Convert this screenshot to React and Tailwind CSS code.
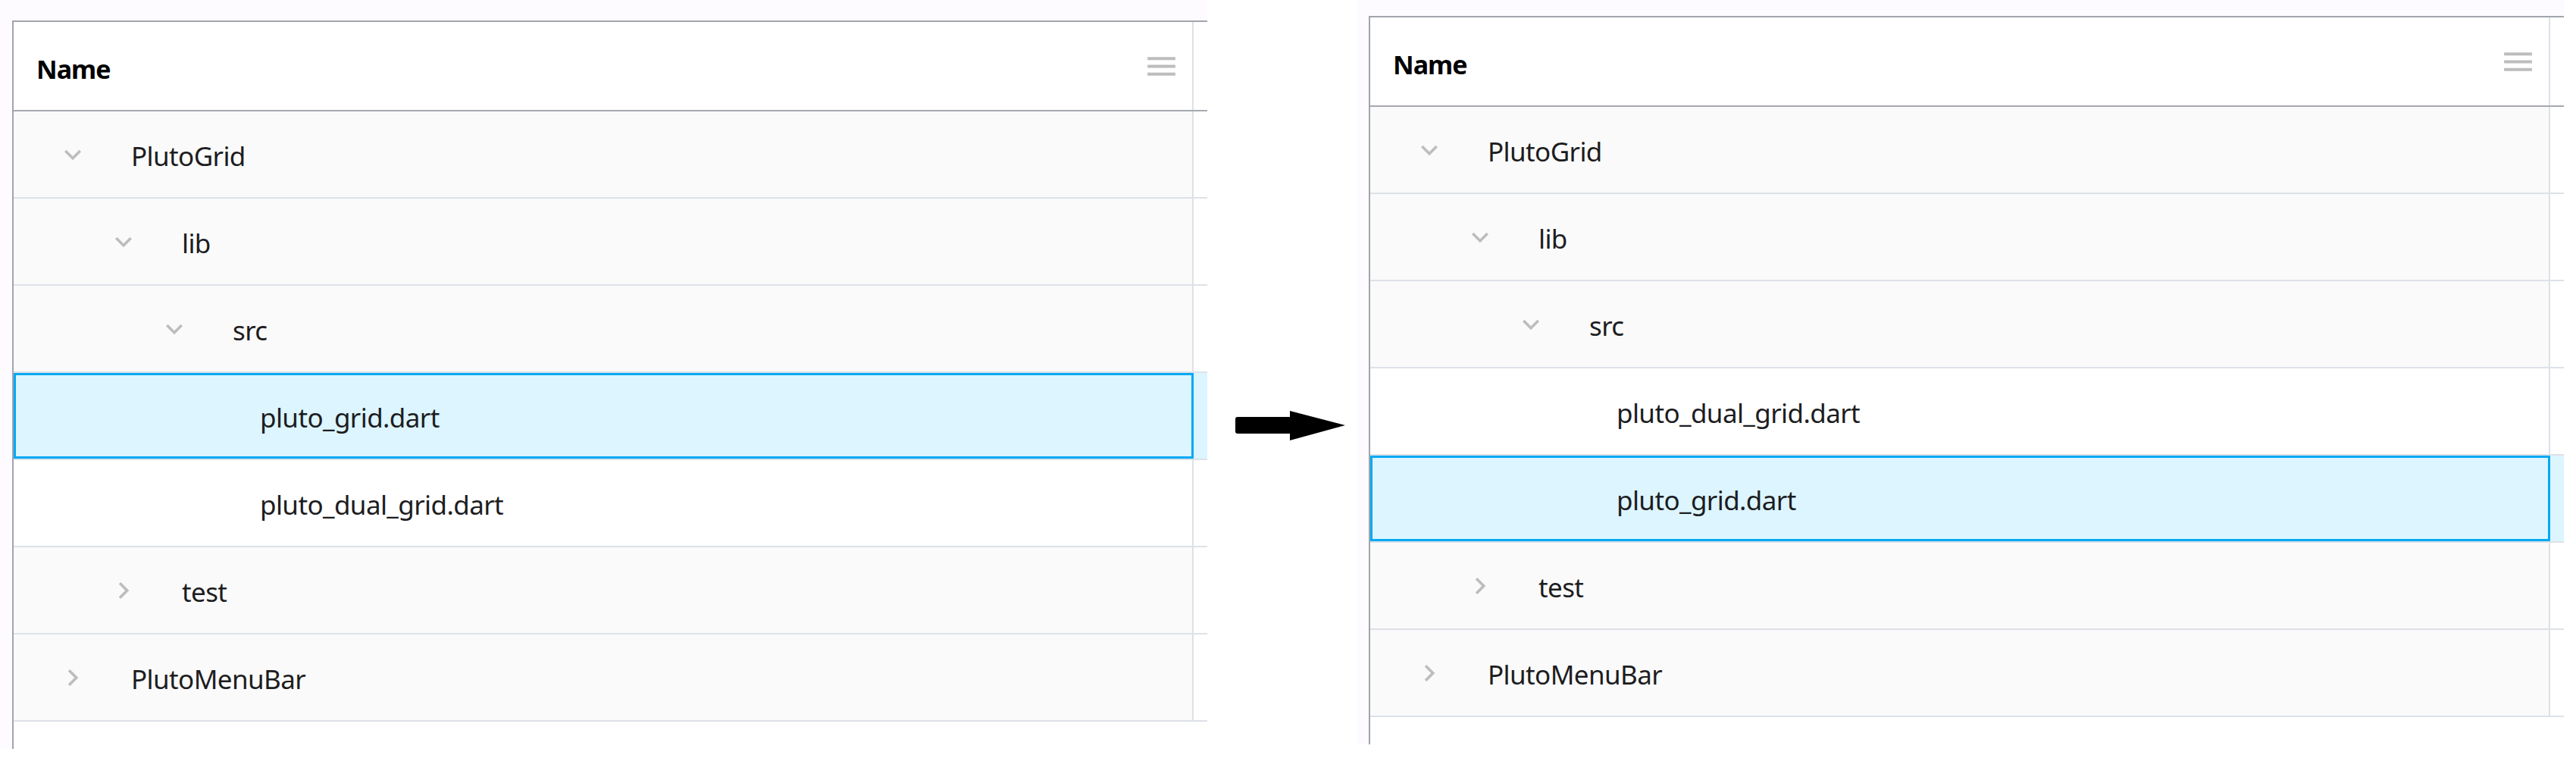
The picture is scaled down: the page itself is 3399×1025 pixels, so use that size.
const ChevronDown = () => (
  <svg viewBox="0 0 24 24" className="w-[44px] h-[44px]" fill="#bdbdbd">
    <path d="M7.41 8.59L12 13.17l4.59-4.58L18 10l-6 6-6-6 1.41-1.41z" />
  </svg>
);

const ChevronRight = () => (
  <svg viewBox="0 0 24 24" className="w-[44px] h-[44px]" fill="#bdbdbd">
    <path d="M8.59 16.59L13.17 12 8.59 7.41 10 6l6 6-6 6-1.41-1.41z" />
  </svg>
);

const MenuIcon = () => (
  <svg viewBox="0 0 24 24" className="w-[49px] h-[49px]" fill="#bdbdbd">
    <path d="M3 18h18v-2H3v2zm0-5h18v-2H3v2zm0-5h18V6H3v2z" />
  </svg>
);

const indent = ["pl-[56px]", "pl-[123px]", "pl-[190px]"];

const beforeRows = [
  { name: "PlutoGrid", depth: 0, folder: true, open: true },
  { name: "lib", depth: 1, folder: true, open: true },
  { name: "src", depth: 2, folder: true, open: true },
  { name: "pluto_grid.dart", selected: true },
  { name: "pluto_dual_grid.dart" },
  { name: "test", depth: 1, folder: true },
  { name: "PlutoMenuBar", depth: 0, folder: true },
];

const afterRows = [
  { name: "PlutoGrid", depth: 0, folder: true, open: true },
  { name: "lib", depth: 1, folder: true, open: true },
  { name: "src", depth: 2, folder: true, open: true },
  { name: "pluto_dual_grid.dart" },
  { name: "pluto_grid.dart", selected: true },
  { name: "test", depth: 1, folder: true },
  { name: "PlutoMenuBar", depth: 0, folder: true },
];

function Row({ row }) {
  if (row.selected) {
    return (
      <div className="flex h-[115px] border-b-2 border-[#dde1e8] bg-[#dcf5ff]">
        <div className="w-[1557px] h-full border-[3px] border-[#03a9f4] flex items-center pl-[322px]">
          <span className="text-[35px] tracking-[-0.6px] text-[#1d1d1f] pt-[6px]">{row.name}</span>
        </div>
        <div className="flex-1" />
      </div>
    );
  }
  return (
    <div className="flex h-[115px] border-b-2 border-[#dde1e8] bg-white">
      <div
        className={`w-[1557px] h-full border-r-2 border-[#dde1e8] flex items-center ${
          row.folder ? "bg-[#fafafa] " + indent[row.depth] : "bg-white pl-[325px]"
        }`}
      >
        {row.folder && (
          <div className="w-[44px] flex justify-center">
            {row.open ? <ChevronDown /> : <ChevronRight />}
          </div>
        )}
        <span
          className={`text-[35px] tracking-[-0.6px] text-[#1d1d1f] pt-[6px] ${row.folder ? "ml-[55px]" : ""}`}
        >
          {row.name}
        </span>
      </div>
      <div className="flex-1" />
    </div>
  );
}

function Grid({ rows }) {
  return (
    <div className="flex-1 bg-white border-t-2 border-l-2 border-[#a2a5ab] flex flex-col">
      <div className="flex h-[118px] border-b-2 border-[#a5a8b0]">
        <div className="w-[1557px] h-full border-r-2 border-[#dde1e8] flex items-center justify-between pl-[30px] pr-[16px]">
          <span className="text-[34px] tracking-[-1px] font-bold text-black pt-[8px]">Name</span>
          <MenuIcon />
        </div>
        <div className="flex-1" />
      </div>
      {rows.map((r, i) => (
        <Row key={i} row={r} />
      ))}
    </div>
  );
}

export default function App() {
  return (
    <div
      className="w-[3399px] h-[1025px] bg-white flex items-start"
      style={{ fontFamily: '"Noto Sans", "Open Sans", sans-serif' }}
    >
      <div className="w-[1593px] h-[988px] bg-[#fdfbff] pt-[27px] pl-[16px] flex flex-col">
        <Grid rows={beforeRows} />
      </div>

      <div className="w-[197px] pl-[37px] pt-[542px]">
        <svg width="145" height="39" viewBox="0 0 145 39">
          <rect x="0" y="8" width="74" height="22" rx="3" fill="#000" />
          <polygon points="72,0 145,19 72,39" fill="#000" />
        </svg>
      </div>

      <div className="w-[1593px] h-[982px] bg-[#fdfbff] pt-[21px] pl-[16px] flex flex-col">
        <Grid rows={afterRows} />
      </div>
    </div>
  );
}
